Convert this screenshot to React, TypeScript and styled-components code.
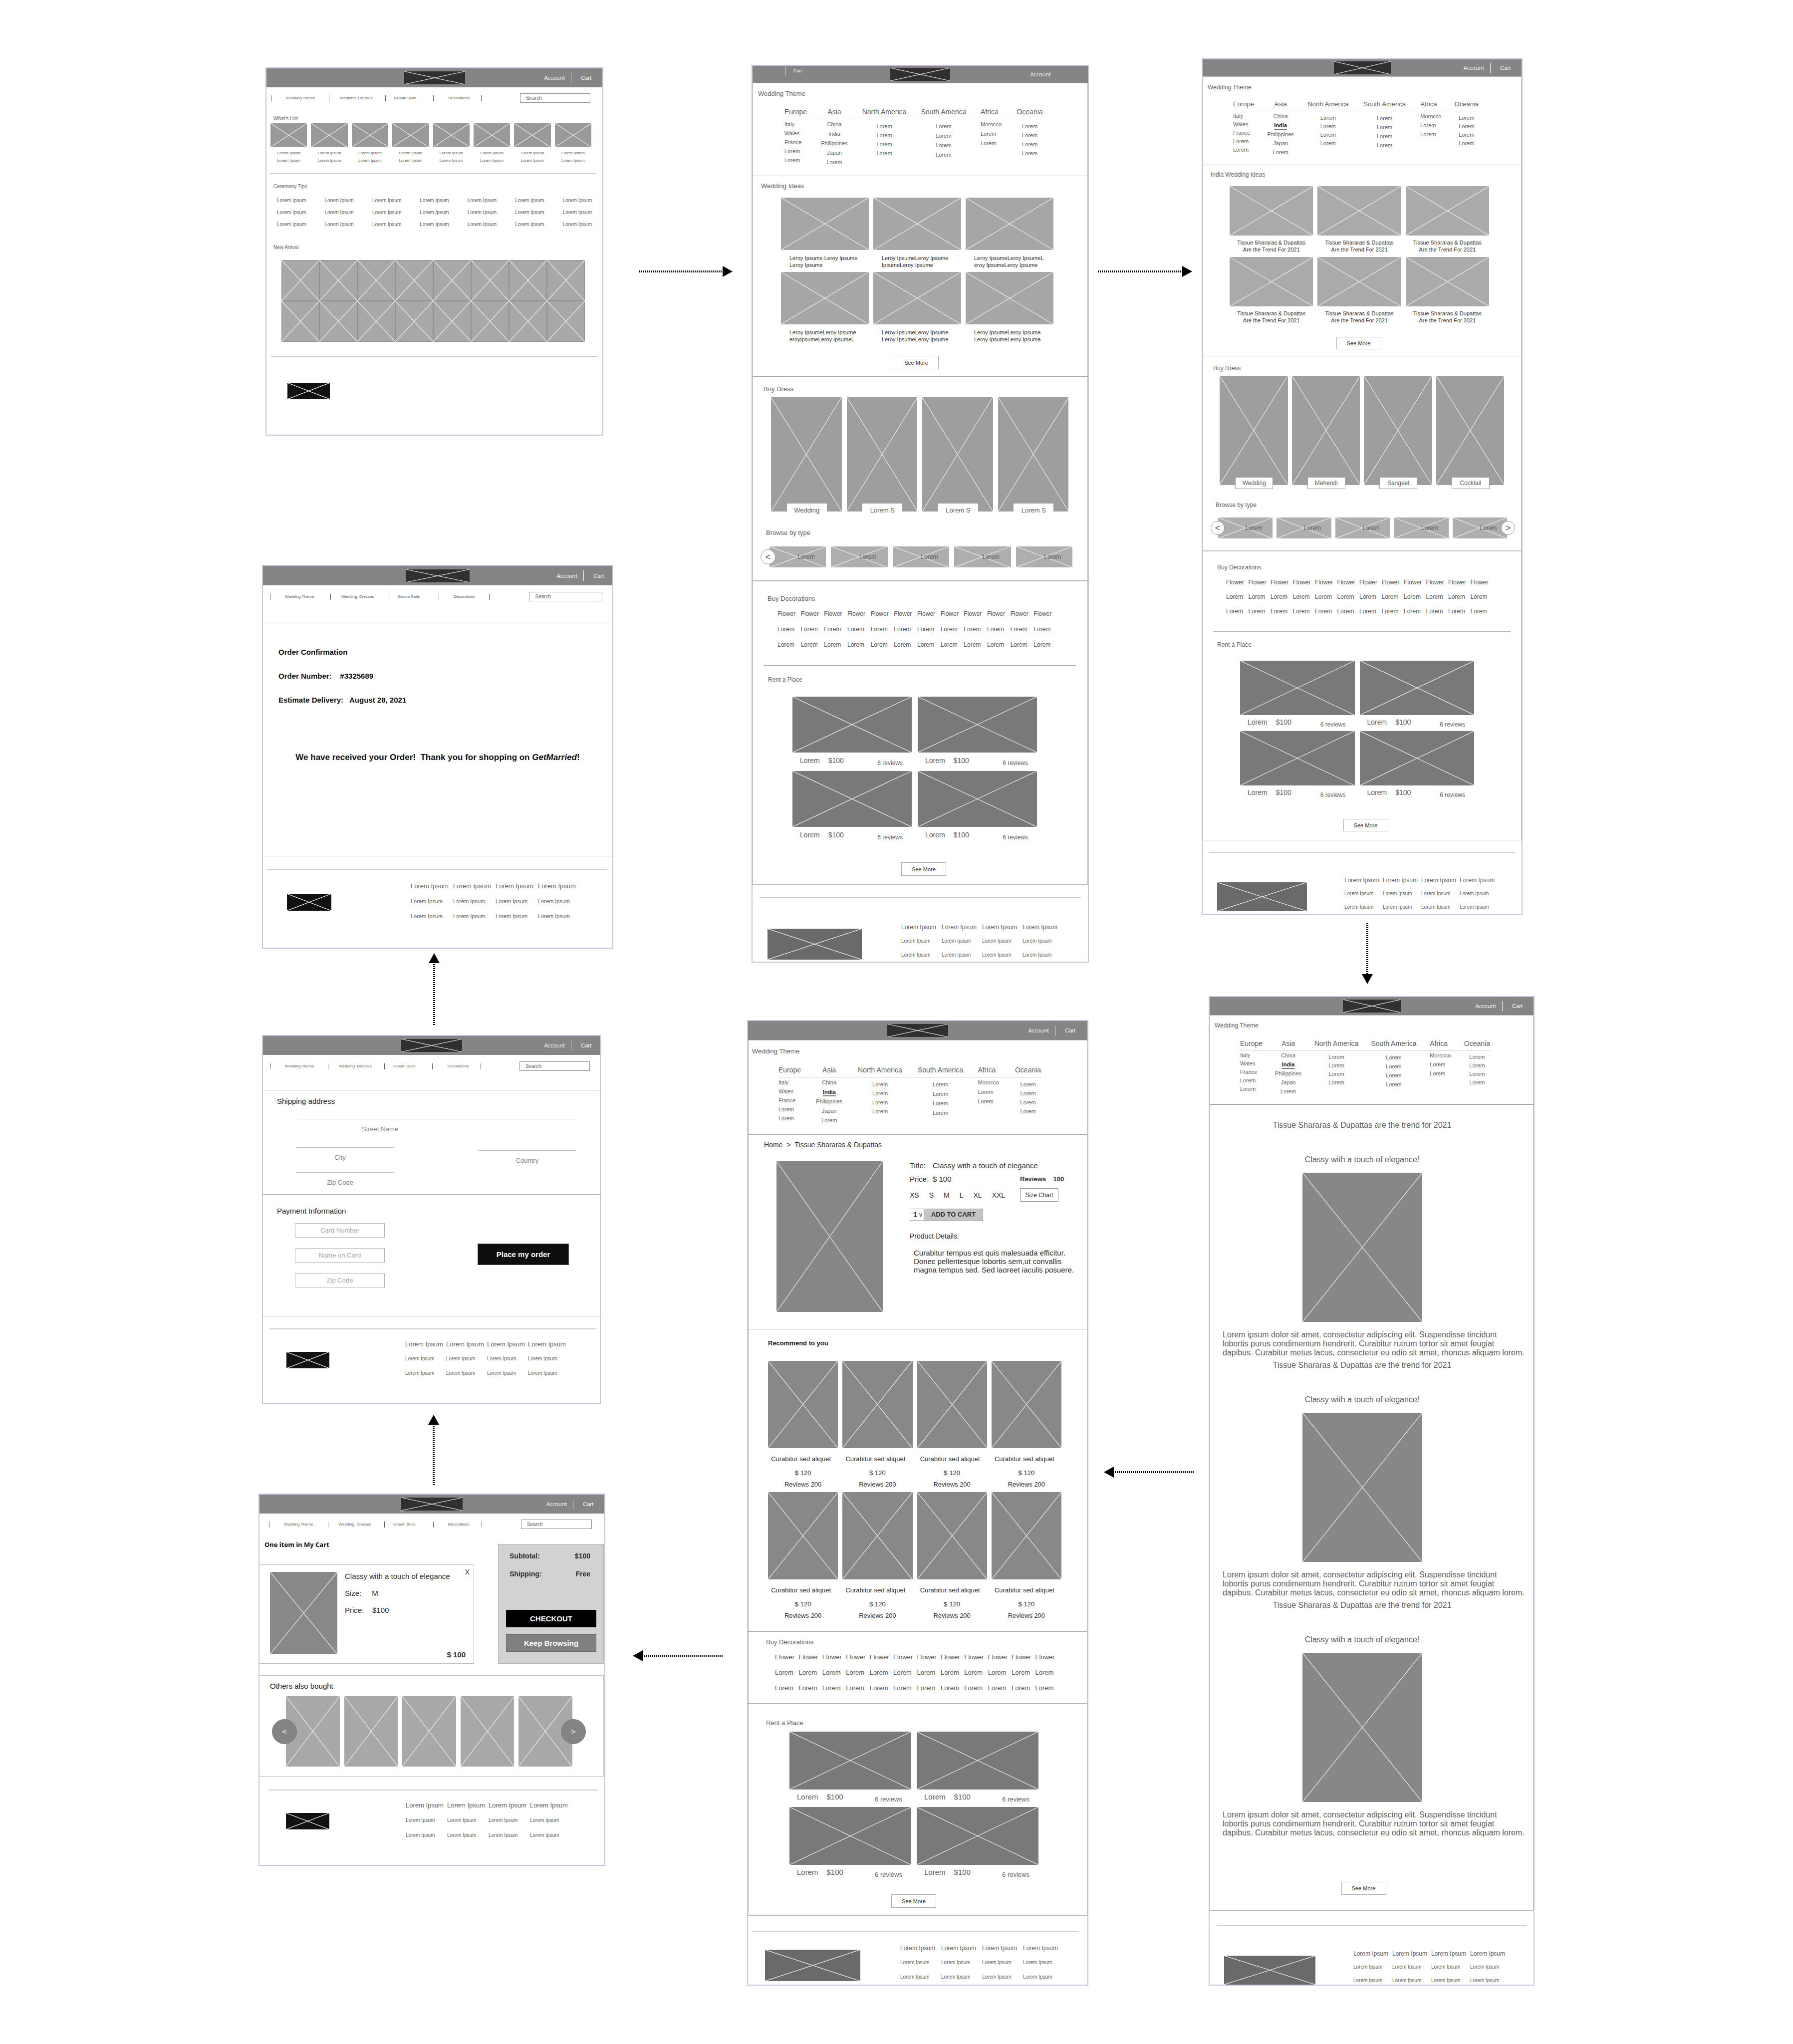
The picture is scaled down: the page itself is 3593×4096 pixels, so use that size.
import React from "react";
import styled, { createGlobalStyle, css } from "styled-components";

const GlobalStyle = createGlobalStyle`
  *, *::before, *::after { box-sizing: border-box; }
  body {
    margin: 0;
    background: #fff;
    color: #5f5f5f;
    font-family: "Liberation Sans", Arial, sans-serif;
    font-size: 12px;
    line-height: 16px;
  }
  h2, h3, h4, p, ul { margin: 0; padding: 0; font-size: inherit; font-weight: 400; }
  ul { list-style: none; }
  a { color: inherit; text-decoration: none; }
  button, input, select { font: inherit; color: inherit; margin: 0; }
`;

const tone = {
  bar: "#858585",
  ink: "#303030",
  text: "#5f5f5f",
  rule: "#cfcfcf",
  line: "#a6a6a6",
  frame: "#cdc2e2",
};

/* ---------- board ---------- */

const Board = styled.main`
  display: grid;
  grid-template-columns: 518fr 711fr 268fr 685fr 226fr 667fr 518fr;
  align-items: start;
  padding-bottom: 117px;
`;

const Lane = styled.div<{ $col: number; $top: number }>`
  grid-column: ${(p) => p.$col};
  padding-top: ${(p) => p.$top}px;
  display: flex;
  flex-direction: column;
  min-width: 0;
`;

const Frame = styled.section<{ $top?: number; $left?: number; $right?: number }>`
  margin: ${(p) => p.$top ?? 0}px ${(p) => p.$right ?? 0}px 0 ${(p) => p.$left ?? 0}px;
  border: 2px solid ${tone.frame};
  background: #fff;
  overflow: hidden;
`;

/* ---------- connectors ---------- */

const ArrowSvg = styled.svg<{ $top: number; $left: number }>`
  display: block;
  flex: none;
  margin: ${(p) => p.$top}px 0 0 ${(p) => p.$left}px;
`;

type Dir = "left" | "right" | "up" | "down";

function Arrow({ dir, length, top, left }: { dir: Dir; length: number; top: number; left: number }) {
  const flat = dir === "left" || dir === "right";
  const w = flat ? length : 22;
  const h = flat ? 22 : length;
  const n = length;
  const shaft = {
    right: `M0 11H${n - 20}`,
    left: `M${n} 11H20`,
    down: `M11 0V${n - 20}`,
    up: `M11 ${n}V20`,
  }[dir];
  const head = {
    right: `M${n - 20} 0L${n} 11L${n - 20} 22Z`,
    left: "M20 0L0 11L20 22Z",
    down: `M0 ${n - 20}L11 ${n}L22 ${n - 20}Z`,
    up: "M0 20L11 0L22 20Z",
  }[dir];
  return (
    <ArrowSvg $top={top} $left={left} width={w} height={h} aria-hidden="true">
      <path d={shaft} stroke="#000" strokeWidth="4" strokeDasharray="2 2" fill="none" />
      <path d={head} fill="#000" />
    </ArrowSvg>
  );
}

/* ---------- image placeholder ---------- */

const Picture = styled.div<{ $h: number; $w?: number; $bg: string; $edge?: boolean }>`
  display: grid;
  flex: none;
  height: ${(p) => p.$h}px;
  width: ${(p) => (p.$w ? p.$w + "px" : "100%")};
  background: ${(p) => p.$bg};
  border-radius: ${(p) => (p.$edge ? 0 : 1)}px;
  ${(p) => p.$edge && css`box-shadow: inset 0 0 0 1px #919191;`}
  > * { grid-area: 1 / 1; }
`;

const Lines = styled.svg`
  display: block;
  width: 100%;
  height: 100%;
  min-height: 0;
`;

type BoxProps = { h: number; w?: number; bg: string; edge?: boolean; children?: React.ReactNode };

function Box({ h, w, bg, edge, children }: BoxProps) {
  return (
    <Picture $h={h} $w={w} $bg={bg} $edge={edge}>
      <Lines viewBox="0 0 100 100" preserveAspectRatio="none" aria-hidden="true">
        <path d="M0 0L100 100M0 100L100 0" stroke="#ececec" strokeWidth="1.2" fill="none" vectorEffect="non-scaling-stroke" />
      </Lines>
      {children}
    </Picture>
  );
}

/* ---------- shared pieces ---------- */

const Bar = styled.header<{ $h: number; $end: number }>`
  display: grid;
  grid-template-columns: 1fr auto 1fr;
  align-items: center;
  height: ${(p) => p.$h}px;
  padding-right: ${(p) => p.$end}px;
  padding-left: ${(p) => p.$end}px;
  background: ${tone.bar};
  color: #fff;
  font-size: 11px;
`;

const BarEnd = styled.div`
  display: flex;
  justify-content: flex-end;
  align-items: center;
`;

const BarStart = styled.div`
  display: flex;
  align-items: center;
  align-self: start;
  gap: 16px;
  padding: 1px 0 0 43px;
  font-size: 9px;
`;

const BarDivider = styled.i<{ $h: number }>`
  width: 1px;
  height: ${(p) => p.$h}px;
  background: #f6ecec;
`;

const Account = styled.a`
  font-family: "Open Sans", "Noto Sans", sans-serif;
`;

const CartLink = styled.a`
  margin-left: 19px;
`;

const BarGap = styled.span`
  width: 12px;
`;

const MovedAccount = styled(Account)`
  margin-right: 52px;
`;

function TopBar({ h, end, logo, moved }: { h: number; end: number; logo: number; moved?: boolean }) {
  return (
    <Bar $h={h} $end={end}>
      {moved ? (
        <BarStart>
          <BarDivider $h={18} />
          <a href="#cart">Cart</a>
        </BarStart>
      ) : (
        <span />
      )}
      <Box h={26} w={logo} bg="#312f30" />
      <BarEnd>
        {moved ? (
          <MovedAccount href="#account">Account</MovedAccount>
        ) : (
          <>
            <Account href="#account">Account</Account>
            <BarGap />
            <BarDivider $h={21} />
            <CartLink href="#cart">Cart</CartLink>
          </>
        )}
      </BarEnd>
    </Bar>
  );
}

const NavRow = styled.div<{ $top: number; $left: number; $right: number; $bottom: number; $line?: boolean }>`
  display: flex;
  align-items: center;
  justify-content: space-between;
  padding: ${(p) => `${p.$top}px ${p.$right}px ${p.$bottom}px ${p.$left}px`};
  ${(p) => p.$line && css`border-bottom: 1px solid ${tone.line};`}
`;

const NavList = styled.nav`
  display: grid;
  grid-template-columns: 117fr 113fr 97fr 97fr;
  width: 66%;
  border-right: 1px solid ${tone.text};
  line-height: 12px;
  font-size: 8px;
`;

const NavLink = styled.a<{ $pad: number }>`
  border-left: 1px solid ${tone.text};
  padding-left: ${(p) => p.$pad}px;
  white-space: pre;
`;

const Search = styled.input`
  width: 22%;
  height: 19px;
  padding: 0 0 0 11px;
  border: 1px solid #8f8f8f;
  border-radius: 0;
  background: #fff;
  font-size: 10px;
  &::placeholder { color: ${tone.text}; opacity: 1; }
`;

type NavProps = { top: number; left: number; right: number; bottom?: number; line?: boolean };

function ShopNav({ top, left, right, bottom = 0, line }: NavProps) {
  return (
    <NavRow $top={top} $left={left} $right={right} $bottom={bottom} $line={line}>
      <NavList>
        <NavLink href="#theme" $pad={29}>Wedding Theme</NavLink>
        <NavLink href="#dresses" $pad={21}>Wedding  Dresses</NavLink>
        <NavLink href="#suits" $pad={17}>Groom Suits</NavLink>
        <NavLink href="#decorations" $pad={29}>Decorations</NavLink>
      </NavList>
      <Search aria-label="Search" placeholder="Search" />
    </NavRow>
  );
}

const Outline = styled.div`
  box-shadow: inset 0 0 0 1px #bdbdbd;
`;

const Part = styled.section<{ $bottom: number; $line?: number; $tone?: string }>`
  padding-bottom: ${(p) => p.$bottom}px;
  border-bottom: ${(p) => p.$line ?? 1}px solid ${(p) => p.$tone ?? tone.line};
`;

const Heading = styled.h3<{ $top: number; $left: number; $size?: number; $strong?: boolean; $dark?: boolean }>`
  padding: ${(p) => p.$top}px 0 0 ${(p) => p.$left}px;
  font-size: ${(p) => p.$size ?? 12}px;
  font-weight: ${(p) => (p.$strong ? 700 : 400)};
  color: ${(p) => (p.$dark ? "#1c1c1c" : tone.text)};
`;

const Tiles = styled.div<{ $cols: number; $top: number; $left: number; $right: number; $gap: number; $rowGap?: number }>`
  position: relative;
  display: grid;
  grid-template-columns: repeat(${(p) => p.$cols}, minmax(0, 1fr));
  gap: ${(p) => p.$rowGap ?? 0}px ${(p) => p.$gap}px;
  margin: ${(p) => `${p.$top}px ${p.$right}px 0 ${p.$left}px`};
`;

const Rule = styled.hr<{ $top: number; $left: number; $right: number; $thick?: number; $tone?: string }>`
  height: ${(p) => p.$thick ?? 2}px;
  margin: ${(p) => `${p.$top}px ${p.$right}px 0 ${p.$left}px`};
  border: 0;
  background: ${(p) => p.$tone ?? tone.rule};
`;

const ButtonRow = styled.div<{ $top: number; $left?: number; $right?: number }>`
  display: flex;
  justify-content: center;
  padding: ${(p) => `${p.$top}px ${p.$right ?? 0}px 0 ${p.$left ?? 0}px`};
`;

const SeeMore = styled.button<{ $h: number }>`
  width: 90px;
  height: ${(p) => p.$h}px;
  padding: 0;
  border: 1px solid #b0b0b0;
  background: #fff;
  color: ${tone.ink};
  font-size: 11px;
`;

/* ---------- region menu ---------- */

const Regions = styled.div<{ $top: number; $left: number; $right: number }>`
  display: grid;
  grid-template-columns: 70fr 60fr 140fr 98fr 97fr 53fr;
  padding: ${(p) => `${p.$top}px ${p.$right}px 0 ${p.$left}px`};
`;

const Region = styled.div<{ $center?: boolean; $indent?: boolean }>`
  text-align: ${(p) => (p.$center ? "center" : "left")};
  white-space: nowrap;
  h4, ul { padding-left: ${(p) => (p.$indent ? 25 : 0)}px; }
`;

const RegionName = styled.h4<{ $size: number; $pad: number }>`
  font-size: ${(p) => p.$size}px;
  line-height: 20px;
  padding-bottom: ${(p) => p.$pad}px;
  border-bottom: 1px solid #c2c2c2;
`;

const Places = styled.ul<{ $top: number; $pitch: number }>`
  margin-top: ${(p) => p.$top}px;
  font-size: 11px;
  line-height: ${(p) => p.$pitch}px;
`;

const Current = styled.a`
  display: inline-block;
  line-height: 14px;
  border-bottom: 2px solid #777;
  color: #222;
  font-weight: 700;
`;

const four = ["Lorem", "Lorem", "Lorem", "Lorem"];
const regions = [
  { name: "Europe", places: ["Italy", "Wales", "France", "Lorem", "Lorem"], extra: 0, low: false },
  { name: "Asia", places: ["China", "India", "Philippines", "Japan", "Lorem"], extra: 1, low: false, center: true },
  { name: "North America", places: four, extra: 0, low: true, center: true },
  { name: "South America", places: four, extra: 1, low: true, center: true },
  { name: "Africa", places: ["Morocco", "Lorem", "Lorem"], extra: 1, low: false, indent: true },
  { name: "Oceania", places: four, extra: 0, low: true, center: true },
];

type MenuProps = {
  title: [number, number, number];
  top: number; left: number; right: number;
  size: number; pad: number; pitch: number; bottom: number;
  line?: number; active?: boolean;
};

function RegionMenu({ title, top, left, right, size, pad, pitch, bottom, line, active }: MenuProps) {
  return (
    <Part as="nav" $bottom={bottom} $line={line}>
      <Heading $top={title[0]} $left={title[1]} $size={title[2]}>Wedding Theme</Heading>
      <Regions $top={top} $left={left} $right={right}>
        {regions.map((r) => (
          <Region key={r.name} $center={r.center} $indent={r.indent}>
            <RegionName $size={size} $pad={pad}>{r.name}</RegionName>
            <Places $top={r.low ? 5 : 1} $pitch={pitch + r.extra}>
              {r.places.map((p, i) => (
                <li key={i}>
                  {active && p === "India" ? <Current href="#india">{p}</Current> : <a href="#place">{p}</a>}
                </li>
              ))}
            </Places>
          </Region>
        ))}
      </Regions>
    </Part>
  );
}

/* ---------- wedding ideas ---------- */

const IdeaText = styled.p<{ $top: number; $center?: boolean }>`
  margin-top: ${(p) => p.$top}px;
  padding-left: ${(p) => (p.$center ? 0 : 17)}px;
  text-align: ${(p) => (p.$center ? "center" : "left")};
  color: ${tone.ink};
  font-size: 11px;
  line-height: 14px;
  white-space: pre;
`;

/* ---------- dresses ---------- */

const DressCard = styled.a<{ $drop: number }>`
  position: relative;
  display: block;
  > span { bottom: -${(p) => p.$drop}px; }
`;

const DressLabel = styled.span<{ $h: number; $w: number; $bordered?: boolean; $size: number }>`
  position: absolute;
  left: calc(50% - ${(p) => p.$w / 2 - 1}px);
  width: ${(p) => p.$w}px;
  height: ${(p) => p.$h}px;
  border: 1px solid ${(p) => (p.$bordered ? "#9c9c9c" : "#fff")};
  background: #fff;
  font-size: ${(p) => p.$size}px;
  line-height: ${(p) => p.$h - 2}px;
  text-align: center;
`;

const TypeName = styled.span`
  align-self: center;
  padding-left: 50%;
`;

const Round = styled.button<{ $size: number; $side: "left" | "right"; $out: number; $dark?: boolean }>`
  position: absolute;
  top: calc(50% - ${(p) => p.$size / 2}px);
  ${(p) => p.$side}: -${(p) => p.$out}px;
  width: ${(p) => p.$size}px;
  height: ${(p) => p.$size}px;
  padding: 0;
  border: 1px solid ${(p) => (p.$dark ? "#7b7b7b" : "#9a9a9a")};
  border-radius: 50%;
  background: ${(p) => (p.$dark ? "#848484" : "#fff")};
  color: ${(p) => (p.$dark ? "#fff" : "#555")};
  font-size: ${(p) => (p.$dark ? 15 : 18)}px;
  line-height: ${(p) => p.$size - 2}px;
`;

/* ---------- decorations ---------- */

const Words = styled.div<{ $top: number; $left: number; $right: number; $gap: number; $size?: number }>`
  display: grid;
  grid-template-columns: repeat(12, minmax(0, 1fr));
  row-gap: ${(p) => p.$gap}px;
  padding: ${(p) => `${p.$top}px ${p.$right}px 0 ${p.$left}px`};
  font-size: ${(p) => p.$size ?? 12}px;
  color: #545454;
`;

const words = Array.from({ length: 36 }, (_, i) => (i < 12 ? "Flower" : "Lorem"));

function Decorations(p: { top: number; left: number; right: number; gap: number; size?: number }) {
  return (
    <Words $top={p.top} $left={p.left} $right={p.right} $gap={p.gap} $size={p.size}>
      {words.map((w, i) => <a href="#decor" key={i}>{w}</a>)}
    </Words>
  );
}

/* ---------- rentals ---------- */

const RentCaption = styled.div<{ $top: number; $size: number }>`
  display: flex;
  margin-top: ${(p) => p.$top}px;
  height: 21px;
  padding: 0 18px 0 15px;
  font-size: ${(p) => p.$size}px;
  gap: 17px;
`;

const ReviewCount = styled.span<{ $size: number }>`
  margin-left: auto;
  padding-top: 5px;
  font-size: ${(p) => p.$size}px;
`;

type RentProps = {
  top: number; left: number; right: number; gap: number; rowGap: number;
  h: number; capTop: number; size: number; small: number;
};

function Rentals(p: RentProps) {
  return (
    <Tiles $cols={2} $top={p.top} $left={p.left} $right={p.right} $gap={p.gap} $rowGap={p.rowGap}>
      {[0, 1, 2, 3].map((i) => (
        <article key={i}>
          <Box h={p.h} bg="#797979" />
          <RentCaption $top={p.capTop} $size={p.size}>
            <span>Lorem</span>
            <span>$100</span>
            <ReviewCount $size={p.small}>6 reviews</ReviewCount>
          </RentCaption>
        </article>
      ))}
    </Tiles>
  );
}

/* ---------- footer ---------- */

const FootBody = styled.div<{ $left: number; $bottom: number }>`
  display: grid;
  grid-template-columns: ${(p) => p.$left}px 1fr;
  align-items: start;
  padding-bottom: ${(p) => p.$bottom}px;
`;

const FootLogo = styled.div<{ $top: number; $left: number }>`
  padding: ${(p) => p.$top}px 0 0 ${(p) => p.$left}px;
`;

const FootLinks = styled.div<{ $top: number; $pitch: number; $gap: number; $head: number; $small: number }>`
  display: grid;
  grid-template-columns: repeat(4, ${(p) => p.$pitch}px);
  row-gap: ${(p) => p.$gap}px;
  padding-top: ${(p) => p.$top}px;
  font-size: ${(p) => p.$small}px;
  white-space: nowrap;
  a:nth-child(-n + 4) { font-size: ${(p) => p.$head}px; }
`;

type FootProps = {
  top: number; rule: [number, number]; thick?: number;
  logo: { top: number; left: number; w: number; h: number; bg: string };
  links?: { top: number; left: number; pitch: number; gap: number; head: number; small: number };
  bottom: number;
};

function Footer({ top, rule, thick, logo, links, bottom }: FootProps) {
  return (
    <footer>
      <Rule $top={top} $left={rule[0]} $right={rule[1]} $thick={thick} />
      <FootBody $left={links ? links.left : 300} $bottom={bottom}>
        <FootLogo $top={logo.top} $left={logo.left}>
          <Box h={logo.h} w={logo.w} bg={logo.bg} />
        </FootLogo>
        {links && (
          <FootLinks $top={links.top} $pitch={links.pitch} $gap={links.gap} $head={links.head} $small={links.small}>
            {Array.from({ length: 12 }, (_, i) => <a href="#info" key={i}>Lorem Ipsum</a>)}
          </FootLinks>
        )}
      </FootBody>
    </footer>
  );
}

/* ---------- home ---------- */

const HotText = styled.p`
  margin-top: 4px;
  font-size: 8px;
  line-height: 15px;
  text-align: center;
`;

const Tips = styled.div`
  display: grid;
  grid-template-columns: repeat(7, auto);
  justify-content: space-between;
  row-gap: 8px;
  padding: 12px 21px 0;
  font-size: 10px;
`;

function Home() {
  return (
    <Frame $left={14} $right={20}>
      <TopBar h={38} end={22} logo={122} />
      <ShopNav top={12} left={9} right={24} />
      <Heading $top={24} $left={14} $size={10}>What’s Hot</Heading>
      <Tiles $cols={8} $top={1} $left={8} $right={22} $gap={8}>
        {Array.from({ length: 8 }, (_, i) => (
          <article key={i}>
            <Box h={48} bg="#999" />
            <HotText>Lorem Ipsum<br />Lorem Ipsum</HotText>
          </article>
        ))}
      </Tiles>
      <Rule $top={18} $left={6} $right={12} />
      <Heading $top={17} $left={14} $size={10}>Ceremony Tips</Heading>
      <Tips>
        {Array.from({ length: 21 }, (_, i) => <a href="#tip" key={i}>Lorem Ipsum</a>)}
      </Tips>
      <Heading $top={30} $left={14} $size={10}>New Arrival</Heading>
      <Tiles $cols={8} $top={17} $left={30} $right={35} $gap={0}>
        {Array.from({ length: 16 }, (_, i) => <Box key={i} h={82} bg="#a8a8a8" edge />)}
      </Tiles>
      <Footer top={28} rule={[9, 9]} logo={{ top: 52, left: 42, w: 85, h: 33, bg: "#111" }} bottom={71} />
    </Frame>
  );
}

/* ---------- order confirmation ---------- */

const Strong = styled.p<{ $top: number; $left: number }>`
  padding: ${(p) => p.$top}px 0 0 ${(p) => p.$left}px;
  color: #111;
  font-size: 15px;
  font-weight: 700;
  line-height: 18px;
  white-space: pre;
`;

const Thanks = styled.p`
  padding-top: 96px;
  color: #111;
  font-size: 17px;
  font-weight: 700;
  line-height: 20px;
  text-align: center;
  white-space: pre;
`;

function Confirmation() {
  return (
    <Frame $top={259} $left={7}>
      <TopBar h={39} end={17} logo={128} />
      <ShopNav top={13} left={14} right={20} bottom={43} line />
      <Part $bottom={187} $tone="#bbb">
        <Strong $top={49} $left={31}>Order Confirmation</Strong>
        <Strong $top={30} $left={31}>Order Number:    #3325689</Strong>
        <Strong $top={30} $left={31}>Estimate Delivery:   August 28, 2021</Strong>
        <Thanks>We have received your Order!  Thank you for shopping on <em>GetMarried</em>!</Thanks>
      </Part>
      <Footer top={26} rule={[7, 10]} logo={{ top: 47, left: 48, w: 89, h: 34, bg: "#111" }}
        links={{ top: 24, left: 296, pitch: 85, gap: 14, head: 13, small: 11 }} bottom={55} />
    </Frame>
  );
}

/* ---------- shipping and payment ---------- */

const FormTitle = styled.h3<{ $top: number }>`
  padding: ${(p) => p.$top}px 0 0 28px;
  color: #1c1c1c;
  font-size: 15px;
  line-height: 18px;
`;

const LineField = styled.label<{ $top: number; $align?: string; $pl?: number; $pr?: number }>`
  display: flex;
  flex-direction: column;
  gap: 12px;
  padding-top: ${(p) => p.$top}px;
  color: #838383;
  font-size: 13px;
  > span {
    text-align: ${(p) => p.$align ?? "center"};
    padding: 0 ${(p) => p.$pr ?? 0}px 0 ${(p) => p.$pl ?? 0}px;
  }
`;

const LineInput = styled.input`
  width: 100%;
  height: 21px;
  padding: 0;
  border: 0;
  border-bottom: 1px solid #bcbcbc;
  background: transparent;
`;

const AddressForm = styled.div`
  display: grid;
  grid-template-columns: 195px 195px;
  justify-content: space-between;
  padding: 6px 48px 0 67px;
`;

const Street = styled.div`
  grid-column: 1 / 3;
`;

const PayRow = styled.div`
  display: flex;
  justify-content: space-between;
  align-items: flex-start;
  padding: 15px 62px 0 64px;
`;

const PayFields = styled.div`
  display: flex;
  flex-direction: column;
  gap: 21px;
`;

const PayInput = styled.input`
  width: 180px;
  height: 29px;
  padding: 0;
  border: 1px solid #b4b4b4;
  text-align: center;
  font-size: 13px;
  &::placeholder { color: #a6a6a6; opacity: 1; }
`;

const PlaceOrder = styled.button`
  width: 183px;
  height: 43px;
  margin-top: 41px;
  border: 1px solid #555;
  background: #0e0e0e;
  color: #fff;
  font-size: 15px;
  font-weight: 700;
`;

function Shipping() {
  return (
    <Frame $top={20} $left={7} $right={25}>
      <TopBar h={38} end={17} logo={122} />
      <ShopNav top={13} left={14} right={20} bottom={38} line />
      <Part $bottom={15}>
        <FormTitle $top={13}>Shipping address</FormTitle>
        <AddressForm>
          <Street>
            <LineField $top={0} $align="left" $pl={131}>
              <LineInput />
              <span>Street Name</span>
            </LineField>
          </Street>
          <div>
            <LineField $top={8} $pr={20}>
              <LineInput />
              <span>City</span>
            </LineField>
            <LineField $top={1} $pr={20}>
              <LineInput />
              <span>Zip Code</span>
            </LineField>
          </div>
          <LineField $top={14}>
            <LineInput />
            <span>Country</span>
          </LineField>
        </AddressForm>
      </Part>
      <Part $bottom={57} $tone="#bbb">
        <FormTitle $top={24}>Payment Information</FormTitle>
        <PayRow>
          <PayFields>
            <PayInput aria-label="Card Number" placeholder="Card Number" />
            <PayInput aria-label="Name on Card" placeholder="Name on Card" />
            <PayInput aria-label="Zip Code" placeholder="Zip Code" />
          </PayFields>
          <PlaceOrder>Place my order</PlaceOrder>
        </PayRow>
      </Part>
      <Footer top={24} rule={[12, 7]} logo={{ top: 45, left: 47, w: 86, h: 33, bg: "#111" }}
        links={{ top: 22, left: 285, pitch: 82, gap: 13, head: 13, small: 10 }} bottom={52} />
    </Frame>
  );
}

/* ---------- cart ---------- */

const CartLayout = styled.div`
  display: flex;
  justify-content: space-between;
  padding: 22px 1px 0 0;
`;

const CartMain = styled.div`
  width: 430px;
`;

const CartTitle = styled.h2`
  padding-left: 10px;
  color: #111;
  font: 700 13px/18px "Noto Sans", "Open Sans", sans-serif;
`;

const CartItem = styled.article`
  display: grid;
  grid-template-columns: 135px 1fr auto;
  column-gap: 15px;
  align-items: start;
  margin-top: 31px;
  padding: 5px 8px 8px 21px;
  border: 1px solid #bdbdbd;
  border-left: 0;
  color: ${tone.ink};
  font-size: 15px;
  line-height: 18px;
`;

const CartPicture = styled.div`
  padding-top: 9px;
`;

const CartInfo = styled.div`
  display: flex;
  flex-direction: column;
  gap: 16px;
  width: 0;
  padding-top: 9px;
  white-space: pre;
`;

const CartEnd = styled.div`
  align-self: stretch;
  display: flex;
  flex-direction: column;
  justify-content: space-between;
  align-items: flex-end;
  height: 184px;
`;

const Remove = styled.button`
  padding: 0;
  border: 0;
  background: none;
  font-size: 14px;
  line-height: 18px;
`;

const CartTotal = styled.strong`
  padding-right: 8px;
`;

const Summary = styled.aside`
  width: 212px;
  margin-top: 8px;
  padding: 14px 14px 0 15px;
  border: 1px solid #b3b3b3;
  background: #d2d2d2;
  color: ${tone.ink};
  font-size: 14px;
  font-weight: 700;
  line-height: 18px;
`;

const SumRow = styled.div`
  display: flex;
  justify-content: space-between;
  padding: 0 12px 0 7px;
  margin-bottom: 18px;
`;

const SumButtons = styled.div`
  display: flex;
  flex-direction: column;
  gap: 14px;
  margin-top: 63px;
`;

const SumButton = styled.button<{ $bg: string }>`
  height: 35px;
  border: 1px solid rgba(0, 0, 0, 0.2);
  background: ${(p) => p.$bg};
  color: #fff;
  font-size: 15px;
  font-weight: 700;
`;

const Others = styled.section`
  margin: 23px 1px 0 0;
  padding: 12px 0 19px;
  border: 1px solid #c2c2c2;
  border-left: 0;
`;

const OthersTitle = styled.h3`
  padding-left: 21px;
  color: #1c1c1c;
  font-size: 15px;
  line-height: 18px;
`;

function Cart() {
  return (
    <Frame $top={17} $right={16}>
      <TopBar h={38} end={22} logo={123} />
      <ShopNav top={12} left={19} right={25} />
      <CartLayout>
        <CartMain>
          <CartTitle>One item in My Cart</CartTitle>
          <CartItem>
            <CartPicture><Box h={165} bg="#888" /></CartPicture>
            <CartInfo>
              <span>Classy with a touch of elegance</span>
              <span>Size:     M</span>
              <span>Price:    $100</span>
            </CartInfo>
            <CartEnd>
              <Remove aria-label="Remove item">X</Remove>
              <CartTotal>$ 100</CartTotal>
            </CartEnd>
          </CartItem>
        </CartMain>
        <Summary>
          <SumRow><span>Subtotal:</span><span>$100</span></SumRow>
          <SumRow><span>Shipping:</span><span>Free</span></SumRow>
          <SumButtons>
            <SumButton $bg="#000">CHECKOUT</SumButton>
            <SumButton $bg="#808080">Keep Browsing</SumButton>
          </SumButtons>
        </Summary>
      </CartLayout>
      <Others>
        <OthersTitle>Others also bought</OthersTitle>
        <Tiles $cols={5} $top={11} $left={53} $right={62} $gap={9}>
          {[0, 1, 2, 3, 4].map((i) => <Box key={i} h={141} bg="#a8a8a8" />)}
          <Round $size={50} $side="left" $out={28} $dark>&lt;</Round>
          <Round $size={50} $side="right" $out={27} $dark>&gt;</Round>
        </Tiles>
      </Others>
      <Footer top={26} rule={[17, 12]} logo={{ top: 45, left: 53, w: 87, h: 33, bg: "#111" }}
        links={{ top: 22, left: 293, pitch: 83, gap: 14, head: 13, small: 10 }} bottom={51} />
    </Frame>
  );
}

/* ---------- wedding theme ---------- */

const ideas = [
  "Leroy Ipsume Leroy Ipsume\nLeroy Ipsume",
  "Leroy IpsumeLeroy Ipsume\nIpsumeLeroy Ipsume",
  "Leroy IpsumeLeroy IpsumeL\neroy IpsumeLeroy Ipsume",
  "Leroy IpsumeLeroy Ipsume\neroyIpsumeLeroy IpsumeL",
  "Leroy IpsumeLeroy Ipsume\nLeroy IpsumeLeroy Ipsume",
  "Leroy IpsumeLeroy Ipsume\nLeroy IpsumeLeroy Ipsume",
];

function Theme() {
  return (
    <Frame $left={9}>
      <TopBar h={34} end={22} logo={120} moved />
      <Outline>
        <RegionMenu title={[14, 11, 13]} top={18} left={64} right={90} size={14} pad={4} pitch={18} bottom={17} />
        <Part $bottom={14}>
          <Heading $top={12} $left={17} $size={13}>Wedding Ideas</Heading>
          <Tiles $cols={3} $top={15} $left={57} $right={69} $gap={9} $rowGap={7}>
            {ideas.map((t, i) => (
              <article key={i}>
                <Box h={105} bg="#a6a6a6" />
                <IdeaText $top={9}>{t}</IdeaText>
              </article>
            ))}
          </Tiles>
          <ButtonRow $top={26} $right={16}><SeeMore $h={27}>See More</SeeMore></ButtonRow>
        </Part>
        <Part $bottom={26} $line={2} $tone="#b3b3b3">
          <Heading $top={17} $left={22} $size={13}>Buy Dress</Heading>
          <Tiles $cols={4} $top={8} $left={37} $right={39} $gap={10}>
            {["Wedding", "Lorem S", "Lorem S", "Lorem S"].map((t, i) => (
              <DressCard href="#dress" key={i} $drop={11}>
                <Box h={229} bg="#9e9e9e" />
                <DressLabel $h={27} $w={80} $size={13}>{t}</DressLabel>
              </DressCard>
            ))}
          </Tiles>
          <Heading $top={35} $left={27} $size={13}>Browse by type</Heading>
          <Tiles $cols={5} $top={19} $left={34} $right={31} $gap={10}>
            {[0, 1, 2, 3, 4].map((i) => <Box key={i} h={42} bg="#aeaeae"><TypeName>Lorem</TypeName></Box>)}
            <Round $size={30} $side="left" $out={18}>&lt;</Round>
          </Tiles>
        </Part>
        <Heading $top={27} $left={30} $size={13}>Buy Decorations</Heading>
        <Decorations top={14} left={50} right={62} gap={15} />
        <Rule $top={33} $left={22} $right={24} $thick={1} $tone="#a6a6a6" />
        <Part $bottom={17} $tone="#bbb">
          <Heading $top={20} $left={31}>Rent a Place</Heading>
          <Rentals top={26} left={80} right={102} gap={12} rowGap={8} h={112} capTop={8} size={14} small={12} />
          <ButtonRow $top={42} $left={14}><SeeMore $h={27}>See More</SeeMore></ButtonRow>
        </Part>
      </Outline>
      <Footer top={25} rule={[14, 14]} logo={{ top: 61, left: 30, w: 189, h: 62, bg: "#6a6a6a" }}
        links={{ top: 50, left: 298, pitch: 81, gap: 12, head: 12, small: 10 }} bottom={4} />
    </Frame>
  );
}

/* ---------- india ---------- */

function India() {
  return (
    <Frame $right={24}>
      <TopBar h={34} end={22} logo={114} />
      <Outline>
        <RegionMenu title={[14, 10, 12]} top={16} left={61} right={85} size={13} pad={3} pitch={17} bottom={16} active />
        <Part $bottom={13}>
          <Heading $top={11} $left={16}>India Wedding Ideas</Heading>
          <Tiles $cols={3} $top={15} $left={54} $right={65} $gap={9} $rowGap={8}>
            {[0, 1, 2, 3, 4, 5].map((i) => (
              <article key={i}>
                <Box h={99} bg="#aaa" />
                <IdeaText $top={7} $center>{"Tissue Shararas & Dupattas\nAre the Trend For 2021"}</IdeaText>
              </article>
            ))}
          </Tiles>
          <ButtonRow $top={26} $right={14}><SeeMore $h={25}>See More</SeeMore></ButtonRow>
        </Part>
        <Part $bottom={24} $line={2} $tone="#bdbdbd">
          <Heading $top={16} $left={21}>Buy Dress</Heading>
          <Tiles $cols={4} $top={7} $left={34} $right={35} $gap={8}>
            {["Wedding", "Mehendi", "Sangeet", "Cocktail"].map((t) => (
              <DressCard href="#dress" key={t} $drop={8}>
                <Box h={219} bg="#9e9e9e" />
                <DressLabel $h={24} $w={76} $size={12} $bordered>{t}</DressLabel>
              </DressCard>
            ))}
          </Tiles>
          <Heading $top={32} $left={26}>Browse by type</Heading>
          <Tiles $cols={5} $top={17} $left={31} $right={29} $gap={8}>
            {[0, 1, 2, 3, 4].map((i) => <Box key={i} h={42} bg="#aeaeae"><TypeName>Lorem</TypeName></Box>)}
            <Round $size={28} $side="left" $out={15}>&lt;</Round>
            <Round $size={28} $side="right" $out={16}>&gt;</Round>
          </Tiles>
        </Part>
        <Heading $top={24} $left={29}>Buy Decorations</Heading>
        <Decorations top={14} left={47} right={58} gap={13} />
        <Rule $top={32} $left={21} $right={22} $thick={1} $tone="#b5b5b5" />
        <Part $bottom={17} $tone="#bbb">
          <Heading $top={18} $left={29}>Rent a Place</Heading>
          <Rentals top={24} left={75} right={95} gap={10} rowGap={5} h={109} capTop={6} size={14} small={12} />
          <ButtonRow $top={40} $left={14}><SeeMore $h={25}>See More</SeeMore></ButtonRow>
        </Part>
      </Outline>
      <Footer top={23} rule={[13, 13]} logo={{ top: 59, left: 29, w: 180, h: 58, bg: "#6a6a6a" }}
        links={{ top: 47, left: 284, pitch: 77, gap: 11, head: 12, small: 10 }} bottom={6} />
    </Frame>
  );
}

/* ---------- article ---------- */

const Story = styled.article`
  font-size: 16px;
  line-height: 18px;
  margin-bottom: 7px;
`;

const StoryHead = styled.div`
  display: flex;
  flex-direction: column;
  align-items: center;
  padding-right: 38px;
`;

const StoryLead = styled.p`
  padding: 51px 0 17px;
`;

const StoryText = styled.p`
  padding: 17px 0 0 26px;
  white-space: pre;
`;

const Stories = styled.div`
  padding-top: 32px;
`;

const lorem =
  "Lorem ipsum dolor sit amet, consectetur adipiscing elit. Suspendisse tincidunt\n" +
  "lobortis purus condimentum hendrerit. Curabitur rutrum tortor sit amet feugiat\n" +
  "dapibus. Curabitur metus lacus, consectetur eu odio sit amet, rhoncus aliquam lorem.";

function Article() {
  return (
    <Frame $top={24} $left={14}>
      <TopBar h={36} end={22} logo={116} />
      <Outline>
        <RegionMenu title={[13, 10, 12]} top={18} left={61} right={87} size={14} pad={3} pitch={17} bottom={16} line={2} active />
        <Part $bottom={31} $tone="#bbb">
          <Stories>
            {[0, 1, 2].map((i) => (
              <Story key={i}>
                <StoryHead>
                  <h3>Tissue Shararas &amp; Dupattas are the trend for 2021</h3>
                  <StoryLead>Classy with a touch of elegance!</StoryLead>
                  <Box h={299} w={240} bg="#878787" />
                </StoryHead>
                <StoryText>{lorem}</StoryText>
              </Story>
            ))}
          </Stories>
          <ButtonRow $top={82} $right={32}><SeeMore $h={26}>See More</SeeMore></ButtonRow>
        </Part>
      </Outline>
      <Footer top={29} thick={1} rule={[14, 14]} logo={{ top: 60, left: 29, w: 183, h: 58, bg: "#6a6a6a" }}
        links={{ top: 48, left: 288, pitch: 78, gap: 11, head: 12, small: 10 }} bottom={0} />
    </Frame>
  );
}

/* ---------- product ---------- */

const Crumbs = styled.nav`
  display: flex;
  gap: 8px;
  padding: 11px 0 0 32px;
  color: ${tone.ink};
  font-size: 14px;
  line-height: 18px;
`;

const ProductRow = styled.div`
  display: grid;
  grid-template-columns: 213px 1fr;
  column-gap: 54px;
  align-items: start;
  padding: 24px 0 0 57px;
`;

const Info = styled.div`
  color: ${tone.ink};
  font-size: 14px;
  line-height: 18px;
`;

const Fact = styled.p`
  display: grid;
  grid-template-columns: 46px auto;
  justify-content: start;
  font-size: 15px;
`;

const Options = styled.div`
  display: grid;
  grid-template-columns: 221px auto;
  grid-template-rows: 20px 27px;
  row-gap: 8px;
  align-items: center;
  justify-content: start;
  padding-top: 8px;
`;

const Reviews = styled.strong`
  font-size: 13px;
  white-space: pre;
`;

const Sizes = styled.div`
  display: flex;
  gap: 20px;
`;

const SizeButton = styled.button`
  padding: 0;
  border: 0;
  background: none;
`;

const SizeChart = styled.button`
  width: 77px;
  height: 27px;
  padding: 0;
  border: 1px solid #8c8c8c;
  background: #fff;
  font-size: 12px;
`;

const Buy = styled.div`
  display: flex;
  height: 24px;
  margin-top: 14px;
`;

const Quantity = styled.div`
  display: grid;
  width: 28px;
  border: 1px solid #a5a5a5;
  border-right: 0;
  > * { grid-area: 1 / 1; }
  span {
    justify-self: end;
    align-self: center;
    padding-right: 3px;
    pointer-events: none;
    font-size: 12px;
  }
`;

const QuantitySelect = styled.select`
  appearance: none;
  width: 27px;
  padding: 0 0 0 6px;
  border: 0;
  background: transparent;
  font-weight: 700;
`;

const AddToCart = styled.button`
  width: 119px;
  padding: 0;
  border: 1px solid #9c9c9c;
  background: #c4c4c4;
  font-size: 13px;
  font-weight: 700;
`;

const DetailsTitle = styled.p`
  padding-top: 22px;
`;

const Details = styled.p`
  padding: 16px 0 0 8px;
  font-size: 15px;
  line-height: 17px;
  white-space: pre;
`;

const Pick = styled.article`
  color: ${tone.ink};
  font-size: 13px;
  text-align: center;
  white-space: nowrap;
`;

const PickName = styled.p`
  padding: 14px 8px 12px 0;
`;

const PickReviews = styled.p`
  padding-top: 7px;
`;

function Product() {
  return (
    <Frame $top={115} $right={1}>
      <TopBar h={38} end={24} logo={122} />
      <Outline>
        <RegionMenu title={[15, 8, 13]} top={19} left={61} right={92} size={14} pad={4} pitch={18} bottom={18} active />
        <Part $bottom={34}>
          <Crumbs>
            <a href="#home">Home</a>
            <span>&gt;</span>
            <a href="#item">Tissue Shararas &amp; Dupattas</a>
          </Crumbs>
          <ProductRow>
            <Box h={302} bg="#868686" />
            <Info>
              <Fact><span>Title:</span><span>Classy with a touch of elegance</span></Fact>
              <Options>
                <Fact><span>Price:</span><span>$ 100</span></Fact>
                <Reviews>Reviews    100</Reviews>
                <Sizes>
                  {["XS", "S", "M", "L", "XL", "XXL"].map((s) => <SizeButton key={s}>{s}</SizeButton>)}
                </Sizes>
                <SizeChart>Size Chart</SizeChart>
              </Options>
              <Buy>
                <Quantity>
                  <QuantitySelect aria-label="Quantity" defaultValue="1">
                    <option>1</option>
                    <option>2</option>
                  </QuantitySelect>
                  <span>v</span>
                </Quantity>
                <AddToCart>ADD TO CART</AddToCart>
              </Buy>
              <DetailsTitle>Product Details:</DetailsTitle>
              <Details>{"Curabitur tempus est quis malesuada efficitur.\nDonec pellentesque lobortis sem,ut convallis\nmagna tempus sed. Sed laoreet iaculis posuere."}</Details>
            </Info>
          </ProductRow>
        </Part>
        <Part $bottom={23}>
          <Heading $top={20} $left={40} $size={13} $strong $dark>Recommend to you</Heading>
          <Tiles $cols={4} $top={27} $left={40} $right={52} $gap={9} $rowGap={7}>
            {Array.from({ length: 8 }, (_, i) => (
              <Pick key={i}>
                <Box h={175} bg="#888" />
                <PickName>Curabitur sed aliquet</PickName>
                <p>$ 120</p>
                <PickReviews>Reviews 200</PickReviews>
              </Pick>
            ))}
          </Tiles>
        </Part>
        <Part $bottom={22}>
          <Heading $top={13} $left={36} $size={13}>Buy Decorations</Heading>
          <Decorations top={14} left={54} right={57} gap={15} size={13} />
        </Part>
        <Part $bottom={15} $tone="#bbb">
          <Heading $top={31} $left={36} $size={13}>Rent a Place</Heading>
          <Rentals top={9} left={83} right={98} gap={11} rowGap={7} h={116} capTop={7} size={15} small={13} />
          <ButtonRow $top={31} $right={16}><SeeMore $h={27}>See More</SeeMore></ButtonRow>
        </Part>
      </Outline>
      <Footer top={30} rule={[8, 19]} logo={{ top: 36, left: 34, w: 191, h: 63, bg: "#6a6a6a" }}
        links={{ top: 25, left: 305, pitch: 82, gap: 13, head: 12, small: 10 }} bottom={7} />
    </Frame>
  );
}

export default function App() {
  return (
    <>
      <GlobalStyle />
      <Board>
        <Lane $col={2} $top={135}>
          <Home />
          <Confirmation />
          <Arrow dir="up" length={144} top={9} left={341} />
          <Shipping />
          <Arrow dir="up" length={141} top={21} left={340} />
          <Cart />
        </Lane>
        <Lane $col={3} $top={533}>
          <Arrow dir="right" length={188} top={0} left={51} />
          <Arrow dir="left" length={180} top={2752} left={39} />
        </Lane>
        <Lane $col={4} $top={130}>
          <Theme />
          <Product />
        </Lane>
        <Lane $col={5} $top={533}>
          <Arrow dir="right" length={189} top={0} left={18} />
          <Arrow dir="left" length={180} top={2384} left={30} />
        </Lane>
        <Lane $col={6} $top={117}>
          <India />
          <Arrow dir="down" length={122} top={16} left={321} />
          <Article />
        </Lane>
      </Board>
    </>
  );
}
